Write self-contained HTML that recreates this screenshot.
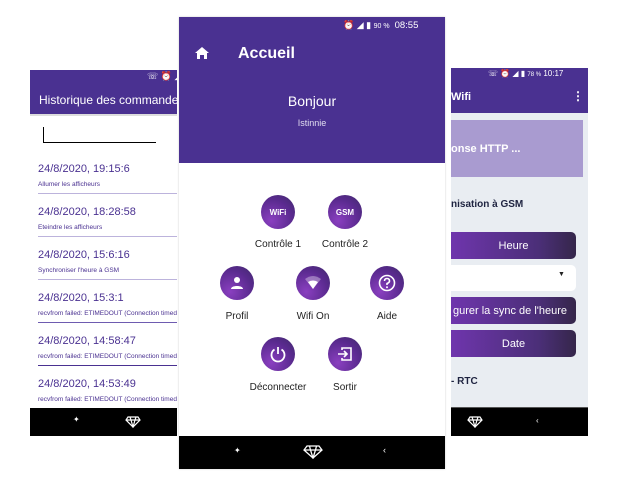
<!DOCTYPE html>
<html><head><meta charset="utf-8"><style>
*{margin:0;padding:0;box-sizing:border-box}
body{width:623px;height:496px;background:#fff;position:relative;overflow:hidden;font-family:"Liberation Sans",sans-serif}
.abs{position:absolute}
.p{background:#4a3191}
.t{position:absolute;white-space:nowrap}
.circ{position:absolute;width:34px;height:34px;border-radius:50%;background:radial-gradient(circle at 30% 75%,#8a3fc0,#5a2a8f 60%,#3f2a6a);color:#fff;font-weight:bold;font-size:8px;display:flex;align-items:center;justify-content:center}
.lbl{position:absolute;font-size:10px;color:#222;transform:translateX(-50%);white-space:nowrap}
.btn{position:absolute;left:451px;width:125px;height:27px;border-radius:0 5px 5px 0;background:linear-gradient(90deg,#6f35ad,#4b2f78 70%,#35264a);color:#fff;font-size:11px;display:flex;align-items:center;justify-content:center}
.d{position:absolute;left:38px;font-size:11px;color:#4a3191}
.s{position:absolute;left:38px;font-size:6.5px;color:#4a3191;white-space:nowrap}
.ln{position:absolute;left:38px;width:139px;height:1px;background:#bcb3dc}
</style></head><body>

<!-- LEFT PHONE -->
<div class="abs" style="left:30px;top:70px;width:147px;height:366px;background:#fff;overflow:hidden">
 <div class="abs p" style="left:0;top:0;width:147px;height:44px"></div>
 <div class="t" style="left:117px;top:1px;color:#fff;font-size:9px">☏ ⏰ ◢</div>
 <div class="t" style="left:9px;top:23px;color:#fff;font-size:12px">Historique des commandes</div>
 <div class="abs" style="left:0;top:44px;width:147px;height:2px;background:#ddd"></div>
 <div class="abs" style="left:13px;top:57px;width:1px;height:15px;background:#000"></div>
 <div class="abs" style="left:13px;top:72px;width:113px;height:1px;background:#000"></div>
 <div class="abs" style="left:0;top:338px;width:147px;height:28px;background:#000"></div>
 <div class="t" style="left:43px;top:345px;color:#fff;font-size:8px">✦</div>
 <svg class="abs" style="left:95px;top:346px" width="16" height="12" viewBox="0 0 16 12"><path d="M3 1H13L15 4L8 11L1 4Z M1 4H15 M5 1L6 4L8 11L10 4L11 1" fill="none" stroke="#fff" stroke-width="1.2"/></svg>
</div>
<div class="d" style="top:163px">24/8/2020, 19:15:6</div><div class="s" style="top:181px">Allumer les afficheurs</div><div class="ln" style="top:193px"></div>
<div class="d" style="top:206px">24/8/2020, 18:28:58</div><div class="s" style="top:224px">Eteindre les afficheurs</div><div class="ln" style="top:236px"></div>
<div class="d" style="top:249px">24/8/2020, 15:6:16</div><div class="s" style="top:267px">Synchroniser l'heure à GSM</div><div class="ln" style="top:279px"></div>
<div class="d" style="top:292px">24/8/2020, 15:3:1</div><div class="s" style="top:310px;width:139px;overflow:hidden">recvfrom failed: ETIMEDOUT (Connection timed out)</div><div class="ln" style="top:322px;background:#6e5bb0"></div>
<div class="d" style="top:335px">24/8/2020, 14:58:47</div><div class="s" style="top:353px;width:139px;overflow:hidden">recvfrom failed: ETIMEDOUT (Connection timed out)</div><div class="ln" style="top:365px;background:#4a3191"></div>
<div class="d" style="top:378px">24/8/2020, 14:53:49</div><div class="s" style="top:396px;width:139px;overflow:hidden">recvfrom failed: ETIMEDOUT (Connection timed out)</div>

<!-- RIGHT PHONE -->
<div class="abs" style="left:451px;top:68px;width:137px;height:368px;background:#e9edf2"></div>
<div class="abs p" style="left:451px;top:68px;width:137px;height:45px"></div>
<div class="t" style="left:488px;top:69px;color:#fff;font-size:8px">☏ ⏰ ◢ ▮ <span style="font-size:6px">78 %</span> 10:17</div>
<div class="t" style="left:451px;top:91px;color:#fff;font-size:11px;font-weight:bold">Wifi</div>
<div class="t" style="left:572px;top:89px;color:#fff;font-size:12px;font-weight:bold">⋮</div>
<div class="abs" style="left:451px;top:120px;width:132px;height:57px;background:#a99bd0"></div>
<div class="t" style="left:451px;top:143px;color:#fff;font-size:11px;font-weight:bold">onse HTTP ...</div>
<div class="t" style="left:451px;top:199px;color:#1e2340;font-size:10px;font-weight:bold">nisation à GSM</div>
<div class="btn" style="top:232px">Heure</div>
<div class="abs" style="left:451px;top:265px;width:125px;height:26px;background:#fff;border-radius:0 5px 5px 0"></div>
<div class="t" style="left:558px;top:271px;font-size:7px;color:#222">▼</div>
<div class="btn" style="top:297px;justify-content:flex-end;padding-right:9px">gurer la sync de l'heure</div>
<div class="btn" style="top:330px">Date</div>
<div class="t" style="left:451px;top:376px;color:#1e2340;font-size:10px;font-weight:bold">- RTC</div>
<div class="abs" style="left:451px;top:407px;width:137px;height:1px;background:#555"></div>
<div class="abs" style="left:451px;top:408px;width:137px;height:28px;background:#000"></div>
<svg class="abs" style="left:467px;top:416px" width="16" height="12" viewBox="0 0 16 12"><path d="M3 1H13L15 4L8 11L1 4Z M1 4H15 M5 1L6 4L8 11L10 4L11 1" fill="none" stroke="#fff" stroke-width="1.2"/></svg>
<div class="t" style="left:536px;top:416px;color:#fff;font-size:8px">‹</div>

<!-- CENTER PHONE -->
<div class="abs" style="left:179px;top:17px;width:266px;height:452px;background:#fff;box-shadow:0 0 2px rgba(0,0,0,.2)"></div>
<div class="abs p" style="left:179px;top:17px;width:266px;height:146px"></div>
<div class="t" style="left:343px;top:20px;color:#fff;font-size:9px">⏰ ◢ ▮ <span style="font-size:7px">90 %</span>&nbsp; <span style="font-size:9.5px">08:55</span></div>
<svg class="abs" style="left:195px;top:47px" width="14" height="12" viewBox="0 0 14 12"><path d="M7 0L0 6H2V12H5V8H9V12H12V6H14Z" fill="#fff"/></svg>
<div class="t" style="left:238px;top:45px;color:#fff;font-size:16px;font-weight:bold">Accueil</div>
<div class="t" style="left:312px;top:93px;color:#fff;font-size:14px;transform:translateX(-50%)">Bonjour</div>
<div class="t" style="left:312px;top:118px;color:#e0dcef;font-size:9px;transform:translateX(-50%)">Istinnie</div>

<div class="circ" style="left:261px;top:195px">WiFi</div>
<div class="circ" style="left:328px;top:195px">GSM</div>
<div class="lbl" style="left:278px;top:239px">Contrôle 1</div>
<div class="lbl" style="left:345px;top:239px">Contrôle 2</div>

<div class="circ" style="left:220px;top:266px"><svg width="16" height="16" viewBox="0 0 16 16"><circle cx="8" cy="5" r="3" fill="#fff"/><path d="M2 14C2 10 14 10 14 14Z" fill="#fff"/></svg></div>
<div class="circ" style="left:296px;top:266px"><svg width="18" height="14" viewBox="0 0 18 14"><path d="M1 3Q9 -3 17 3L9 13Z" fill="#fff" opacity=".35"/><path d="M4 6Q9 3 14 6L9 13Z" fill="#fff"/></svg></div>
<div class="circ" style="left:370px;top:266px"><svg width="18" height="18" viewBox="0 0 18 18"><circle cx="9" cy="9" r="7.5" fill="none" stroke="#fff" stroke-width="1.6"/><path d="M6.5 7Q6.5 4.5 9 4.5Q11.5 4.5 11.5 7Q11.5 8.5 9 9.5V11" fill="none" stroke="#fff" stroke-width="1.6"/><circle cx="9" cy="13.2" r="1" fill="#fff"/></svg></div>
<div class="lbl" style="left:237px;top:311px">Profil</div>
<div class="lbl" style="left:313px;top:311px">Wifi On</div>
<div class="lbl" style="left:387px;top:311px">Aide</div>

<div class="circ" style="left:261px;top:337px"><svg width="18" height="18" viewBox="0 0 18 18"><path d="M5.5 4.5A6.5 6.5 0 1 0 12.5 4.5" fill="none" stroke="#fff" stroke-width="1.8"/><path d="M9 2V9" stroke="#fff" stroke-width="1.8"/></svg></div>
<div class="circ" style="left:328px;top:337px"><svg width="18" height="18" viewBox="0 0 18 18"><path d="M6 5V3H15V15H6V13" fill="none" stroke="#fff" stroke-width="1.6"/><path d="M2 9H11M8 6L11 9L8 12" fill="none" stroke="#fff" stroke-width="1.6"/></svg></div>
<div class="lbl" style="left:278px;top:382px">Déconnecter</div>
<div class="lbl" style="left:345px;top:382px">Sortir</div>

<div class="abs" style="left:179px;top:436px;width:266px;height:33px;background:#000"></div>
<div class="t" style="left:234px;top:446px;color:#fff;font-size:8px">✦</div>
<svg class="abs" style="left:303px;top:445px" width="20" height="14" viewBox="0 0 20 14"><path d="M4 1H16L19 5L10 13L1 5Z M1 5H19 M6.5 1L7.5 5L10 13L12.5 5L13.5 1" fill="none" stroke="#fff" stroke-width="1.3"/></svg>
<div class="t" style="left:383px;top:445px;color:#fff;font-size:9px">‹</div>
</body></html>
